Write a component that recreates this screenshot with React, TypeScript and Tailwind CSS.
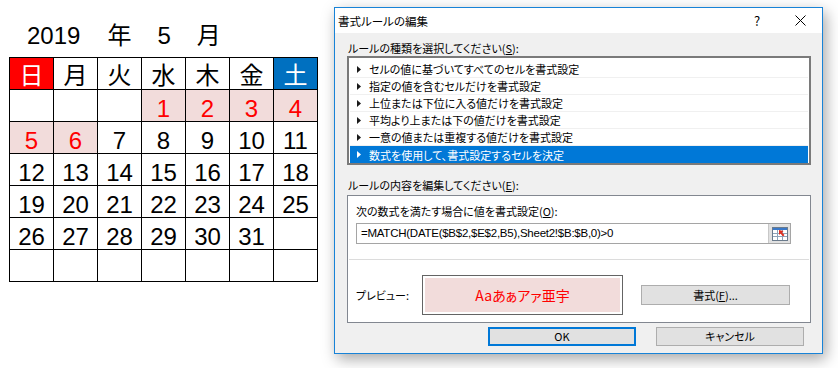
import React from "react";

const jp = "font-['Noto_Sans_CJK_JP','Noto_Sans',sans-serif] [font-feature-settings:'palt']";
const cal = "font-['Liberation_Sans','Noto_Sans_CJK_JP',sans-serif]";

const heads = [
  { t: "日", cls: "bg-[#ff0000] text-white" },
  { t: "月", cls: "bg-white text-black" },
  { t: "火", cls: "bg-white text-black" },
  { t: "水", cls: "bg-white text-black" },
  { t: "木", cls: "bg-white text-black" },
  { t: "金", cls: "bg-white text-black" },
  { t: "土", cls: "bg-[#0070c0] text-white" },
];

// null = empty cell, holidays get pink fill + red digits
const days: (number | null)[] = [
  null, null, null, 1, 2, 3, 4,
  5, 6, 7, 8, 9, 10, 11,
  12, 13, 14, 15, 16, 17, 18,
  19, 20, 21, 22, 23, 24, 25,
  26, 27, 28, 29, 30, 31, null,
  null, null, null, null, null, null, null,
];
const holidays = [1, 2, 3, 4, 5, 6];

const rules = [
  "セルの値に基づいてすべてのセルを書式設定",
  "指定の値を含むセルだけを書式設定",
  "上位または下位に入る値だけを書式設定",
  "平均より上または下の値だけを書式設定",
  "一意の値または重複する値だけを書式設定",
  "数式を使用して、書式設定するセルを決定",
];

function Calendar() {
  return (
    <div className={`w-[318px] shrink-0 pl-[9px] ${cal}`}>
      <div className="flex h-[57px] items-center pl-[18px] pt-[14px] text-[24px] leading-none text-black">
        <span>2019</span>
        <span className="ml-[27px]">年</span>
        <span className="ml-[26px]">5</span>
        <span className="ml-[26px]">月</span>
      </div>
      <div className="grid w-[309px] grid-cols-7 border-l border-t border-black">
        {heads.map((h) => (
          <div
            key={h.t}
            className={`flex h-[32px] items-center justify-center border-b border-r border-black pt-[5px] text-[24px] leading-none ${h.cls}`}
          >
            {h.t}
          </div>
        ))}
        {days.map((d, i) => {
          const hol = d !== null && holidays.includes(d);
          return (
            <div
              key={i}
              className={`flex h-[32px] items-center justify-center border-b border-r border-black pt-[6px] text-[24px] leading-none ${
                hol ? "bg-[#f2dcdb] text-[#ff0000]" : "bg-white text-black"
              }`}
            >
              {d ?? ""}
            </div>
          );
        })}
      </div>
    </div>
  );
}

function RefIcon() {
  return (
    <svg width="16" height="14" viewBox="0 0 16 14">
      <rect x="0.5" y="0.5" width="15" height="13" fill="#fff" stroke="#6b7b8c" />
      <rect x="1" y="1" width="14" height="2" fill="#3a78c8" />
      <path d="M1 6.5H15M1 9.5H15M5.5 3V13M10.5 3V13" stroke="#8fa3b8" strokeWidth="1" />
      <path d="M7 3L7 8L8.5 6.5L11 9.5L12.5 8L10 5.5L11.5 4Z" fill="#e03020" />
    </svg>
  );
}

function Dialog() {
  return (
    <div
      className={`ml-[16px] mt-[7px] flex h-[347px] w-[489px] flex-col border border-[#1883d7] bg-[#f0f0f0] text-[11px] leading-[15px] text-black shadow-[3px_5px_14px_rgba(0,0,0,0.35)] ${jp}`}
    >
      <div className="flex h-[25px] shrink-0 items-center bg-white pl-[3px]">
        <span className="flex-1 pt-[1px] text-[11.5px]">書式ルールの編集</span>
        <span className="w-[12px] text-center text-[13px]">?</span>
        <span className="ml-[31px] mr-[16px] flex h-[12px] w-[12px] items-center justify-center">
          <svg width="11" height="11" viewBox="0 0 11 11">
            <path d="M0.5 0.5L10.5 10.5M10.5 0.5L0.5 10.5" stroke="#000" strokeWidth="1" />
          </svg>
        </span>
      </div>

      <div className="flex flex-col px-[12px]">
        <div className="mt-[7px] h-[16px] pl-[1px] leading-[16px]">
          ルールの種類を選択してください(<u>S</u>):
        </div>
        <div className="h-[109px] w-[464px] border-2 border-[#7a7a7a] bg-white px-[1px] pt-[3px]">
          {rules.map((r, i) => {
            const sel = i === rules.length - 1;
            return (
              <div
                key={r}
                className={`flex h-[17px] items-center ${
                  sel ? "bg-[#0078d7] text-white" : "border-b border-[#f0f0f0] text-black"
                }`}
              >
                <span className="ml-[7px] mr-[8px] flex h-[7px] w-[4px]">
                  <svg width="4" height="7" viewBox="0 0 4 7">
                    <path d="M0 0L4 3.5L0 7Z" fill={sel ? "#fff" : "#1a1a1a"} />
                  </svg>
                </span>
                <span className="text-[11px] leading-[14px]">{r}</span>
              </div>
            );
          })}
        </div>

        <div className="mt-[12px] h-[16px] pl-[1px] leading-[16px]">
          ルールの内容を編集してください(<u>E</u>):
        </div>
        <div className="mt-[2px] flex h-[128px] w-[464px] flex-col border border-[#828790] bg-white">
          <div className="mt-[7px] h-[16px] pl-[8px] leading-[16px]">
            次の数式を満たす場合に値を書式設定(<u>O</u>):
          </div>
          <div className="ml-[8px] mt-[4px] flex h-[21px] w-[435px] items-center border border-[#a5a5a5] bg-white">
            <span className="flex-1 pl-[4px] font-['Liberation_Sans',sans-serif] text-[11.5px] tracking-[-0.25px]">
              =MATCH(DATE($B$2,$E$2,B5),Sheet2!$B:$B,0)&gt;0
            </span>
            <span className="flex h-[19px] w-[22px] items-center justify-center border-l border-[#c8c8c8] bg-[#e1e1e1]">
              <RefIcon />
            </span>
          </div>
          <div className="mx-[1px] mt-[15px] h-px bg-[#dcdcdc]" />
          <div className="mt-[15px] flex h-[40px] items-center">
            <span className="ml-[8px] w-[66px]">プレビュー:</span>
            <div className="h-[40px] w-[201px] border border-[#646464] bg-white p-[2px]">
              <div className="flex h-full items-center justify-center bg-[#f2dcdb] text-[14px] text-[#ff0000]">
                Aaあぁアァ亜宇
              </div>
            </div>
            <button
              type="button"
              className="ml-[18px] flex h-[20px] w-[149px] items-center justify-center border border-[#adadad] bg-[#e1e1e1] text-[11px]"
            >
              書式(<u>F</u>)...
            </button>
          </div>
        </div>

        <div className="mt-[4px] flex justify-end gap-[20px] pr-[6px]">
          <button
            type="button"
            className="flex h-[19px] w-[148px] items-center justify-center border-2 border-[#0078d7] bg-[#e1e1e1] text-[11px]"
          >
            OK
          </button>
          <button
            type="button"
            className="flex h-[19px] w-[148px] items-center justify-center border border-[#adadad] bg-[#e1e1e1] text-[11px]"
          >
            キャンセル
          </button>
        </div>
      </div>
    </div>
  );
}

export default function App() {
  return (
    <div className="flex h-[368px] w-[838px] items-start overflow-hidden bg-white">
      <Calendar />
      <Dialog />
    </div>
  );
}
